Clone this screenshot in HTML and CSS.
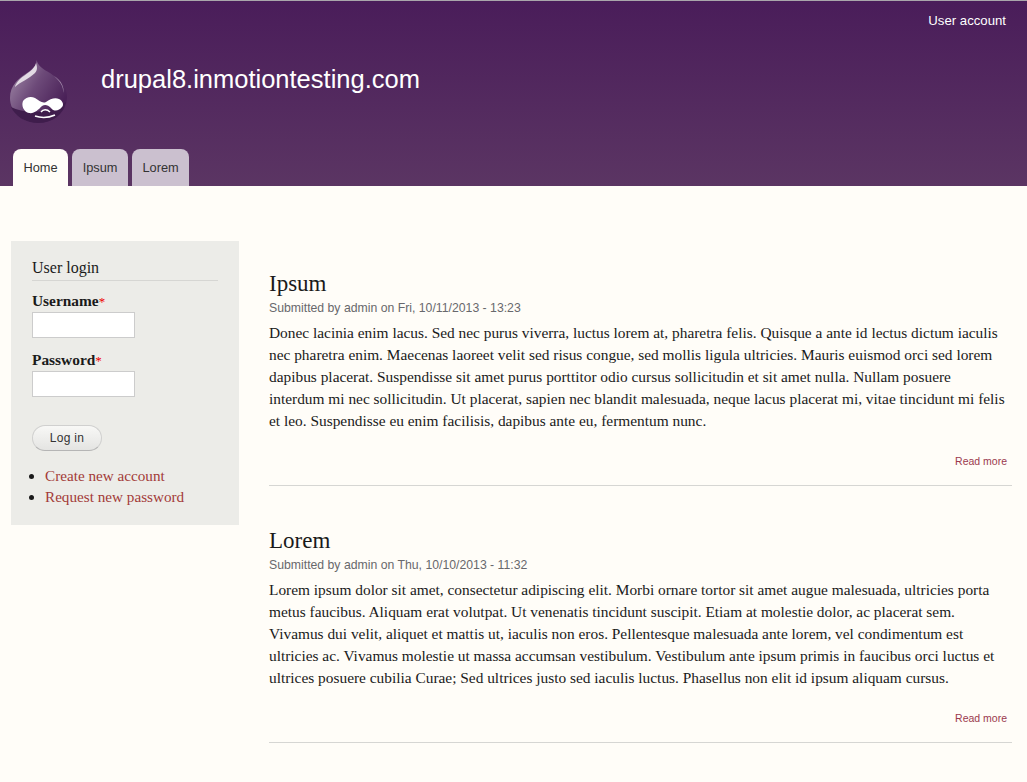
FILE: index.html
```html
<!DOCTYPE html>
<html lang="en">
<head>
<meta charset="utf-8">
<title>drupal8.inmotiontesting.com</title>
<link rel="stylesheet" href="styles.css">
</head>
<body>
<header class="site-header">
  <nav class="secondary-menu"><a href="#">User account</a></nav>
  <div class="branding">
    <svg class="logo" width="58" height="65" viewBox="0 0 58 65" aria-label="Drupal logo">
      <defs>
        <linearGradient id="drop" x1="0" y1="0.1" x2="0.9" y2="0.7">
          <stop offset="0" stop-color="#a48eab"/>
          <stop offset="0.5" stop-color="#6d4a79"/>
          <stop offset="1" stop-color="#4a2158"/>
        </linearGradient>
      </defs>
      <path d="M26.5 0C27 5 23 9 17 13C9 18 0 25 0 38C0 52 12 63 28 63C44 63 57 52 57 37C57 24 47 18 40 13C33 9 28 6 26.5 0Z" fill="url(#drop)"/>
      <path d="M1 47C14 54 40 54 56 42C53 55 42 63 28 63C15 63 5 56 1 47Z" fill="#3f1d4c"/>
      <path d="M26 3C25 9 16 14 10 19C7 22 5 25 5 27C10 22 19 19 25 13C28 10 27 6 26 3Z" fill="#e2dae4"/>
      <path d="M44 16C50 21 54 27 53 33C55 28 51 20 44 16Z" fill="#a990b0"/>
      <path d="M13 41C16 37 21 36 25 38C29 40 32 44 36 42C40 39 45 37 49 39C53 41 54 45 52 47C49 51 44 52 41 48C38 45 35 44 32 46C28 50 24 54 19 53C14 52 11 46 13 41Z" fill="#fff"/>
      <path d="M25 56C31 58 38 58 45 55" fill="none" stroke="#fff" stroke-width="1.6"/>
      <path d="M31 52C33 49 37 49 40 52" fill="none" stroke="#fff" stroke-width="1.4"/>
    </svg>
    <a class="site-name" href="#">drupal8.inmotiontesting.com</a>
  </div>
  <ul class="tabs">
    <li class="tab tab-active"><a href="#">Home</a></li>
    <li class="tab"><a href="#">Ipsum</a></li>
    <li class="tab"><a href="#">Lorem</a></li>
  </ul>
</header>
<div class="page">
  <aside class="sidebar">
    <h2 class="block-title">User login</h2>
    <form class="login">
      <label class="field-label" for="u">Username<span class="req">*</span></label>
      <input class="field-input" id="u" type="text">
      <label class="field-label field-label-second" for="p">Password<span class="req">*</span></label>
      <input class="field-input" id="p" type="password">
      <button class="button" type="button">Log in</button>
    </form>
    <ul class="links">
      <li><a href="#">Create new account</a></li>
      <li><a href="#">Request new password</a></li>
    </ul>
  </aside>
  <main class="content">
    <article class="node">
      <h2 class="node-title">Ipsum</h2>
      <p class="submitted">Submitted by admin on Fri, 10/11/2013 - 13:23</p>
      <p class="body">Donec lacinia enim lacus. Sed nec purus viverra, luctus lorem at, pharetra felis. Quisque a ante id lectus dictum iaculis<br>nec pharetra enim. Maecenas laoreet velit sed risus congue, sed mollis ligula ultricies. Mauris euismod orci sed lorem<br>dapibus placerat. Suspendisse sit amet purus porttitor odio cursus sollicitudin et sit amet nulla. Nullam posuere<br>interdum mi nec sollicitudin. Ut placerat, sapien nec blandit malesuada, neque lacus placerat mi, vitae tincidunt mi felis<br>et leo. Suspendisse eu enim facilisis, dapibus ante eu, fermentum nunc.</p>
      <div class="more"><a href="#">Read more</a></div>
    </article>
    <article class="node">
      <h2 class="node-title">Lorem</h2>
      <p class="submitted">Submitted by admin on Thu, 10/10/2013 - 11:32</p>
      <p class="body">Lorem ipsum dolor sit amet, consectetur adipiscing elit. Morbi ornare tortor sit amet augue malesuada, ultricies porta<br>metus faucibus. Aliquam erat volutpat. Ut venenatis tincidunt suscipit. Etiam at molestie dolor, ac placerat sem.<br>Vivamus dui velit, aliquet et mattis ut, iaculis non eros. Pellentesque malesuada ante lorem, vel condimentum est<br>ultricies ac. Vivamus molestie ut massa accumsan vestibulum. Vestibulum ante ipsum primis in faucibus orci luctus et<br>ultrices posuere cubilia Curae; Sed ultrices justo sed iaculis luctus. Phasellus non elit id ipsum aliquam cursus.</p>
      <div class="more"><a href="#">Read more</a></div>
    </article>
  </main>
</div>
</body>
</html>
```
FILE: styles.css
```css
* { box-sizing: border-box; }
html, body { margin: 0; padding: 0; }
body {
  background: #fffdf8;
  color: #1a1a1a;
  font-family: "Liberation Serif", serif;
  font-size: 15px;
  overflow: hidden;
  height: 782px;
}
a { text-decoration: none; }

.site-header {
  height: 186px;
  border-top: 1px solid #a9a6ab;
  background: linear-gradient(#4a1d5a, #5b3563);
  display: flex;
  flex-direction: column;
  font-family: "Liberation Sans", sans-serif;
}
.secondary-menu {
  display: flex;
  justify-content: flex-end;
  padding: 12px 21px 0 0;
  height: 27px;
  font-size: 13.2px;
  line-height: 16px;
}
.secondary-menu a { color: #fff; }
.branding {
  display: flex;
  align-items: flex-start;
  padding: 32px 0 0 10px;
  height: 121px;
}
.site-name {
  color: #fff;
  font-size: 25.5px;
  line-height: 28px;
  margin: 5px 0 0 33px;
}
.tabs {
  list-style: none;
  margin: 0;
  padding: 0 0 0 13px;
  display: flex;
  gap: 4px;
}
.tab {
  height: 37px;
  padding: 0 10.5px;
  background: #cbc0cf;
  border-radius: 8px 8px 0 0;
  font-size: 12.8px;
  line-height: 37px;
}
.tab a { color: #333; }
.tab-active { background: #fffdf8; }

.page {
  display: flex;
  align-items: flex-start;
  padding: 55px 15px 0 11px;
  gap: 30px;
}
.sidebar {
  flex: 0 0 228px;
  height: 284px;
  background: #ecece8;
  padding: 18px 21px 0;
  color: #1a1a1a;
}
.block-title {
  margin: 0;
  font-size: 16px;
  font-weight: normal;
  line-height: 17px;
  padding-bottom: 4px;
  border-bottom: 1px solid #d6d6d3;
}
.login { display: flex; flex-direction: column; align-items: flex-start; }
.field-label {
  font-weight: bold;
  font-size: 15.4px;
  line-height: 18px;
  margin-top: 11px;
  height: 20px;
}
.field-label-second { margin-top: 13px; }
.req { color: #e00; font-weight: normal; font-size: 13px; }
.field-input {
  width: 103px;
  height: 26px;
  background: #fff;
  border: 1px solid #ccc;
  padding: 0;
  display: block;
}
.button {
  margin-top: 28px;
  width: 70px;
  height: 26px;
  border: 1px solid #d0d0cf;
  border-bottom-color: #b5b5b5;
  border-radius: 13px;
  background: linear-gradient(#f8f8f6, #e4e4e2);
  font-family: "Liberation Sans", sans-serif;
  font-size: 12px;
  letter-spacing: 0.3px;
  color: #333;
  padding: 0;
}
.links {
  margin: 14px 0 0;
  padding: 0 0 0 13px;
  font-size: 15.2px;
  line-height: 21px;
}
.links a { color: #a33b38; }

.content { flex: 1; padding-top: 31px; }
.node { border-bottom: 1px solid #d6d6d3; height: 214px; margin-bottom: 43px; }
.node-title {
  margin: 0;
  font-weight: normal;
  font-size: 23px;
  line-height: 24px;
  color: #1a1a1a;
}
.submitted {
  margin: 4px 0 0;
  font-family: "Liberation Sans", sans-serif;
  font-size: 12.25px;
  line-height: 16px;
  color: #68686c;
}
.body {
  margin: 6px 0 0;
  font-size: 15.38px;
  line-height: 22px;
  white-space: nowrap;
}
.more {
  margin-top: 22px;
  padding-right: 5px;
  text-align: right;
  font-family: "Liberation Sans", sans-serif;
  font-size: 10.5px;
  line-height: 14px;
}
.more a { color: #9b3a4e; }
```
